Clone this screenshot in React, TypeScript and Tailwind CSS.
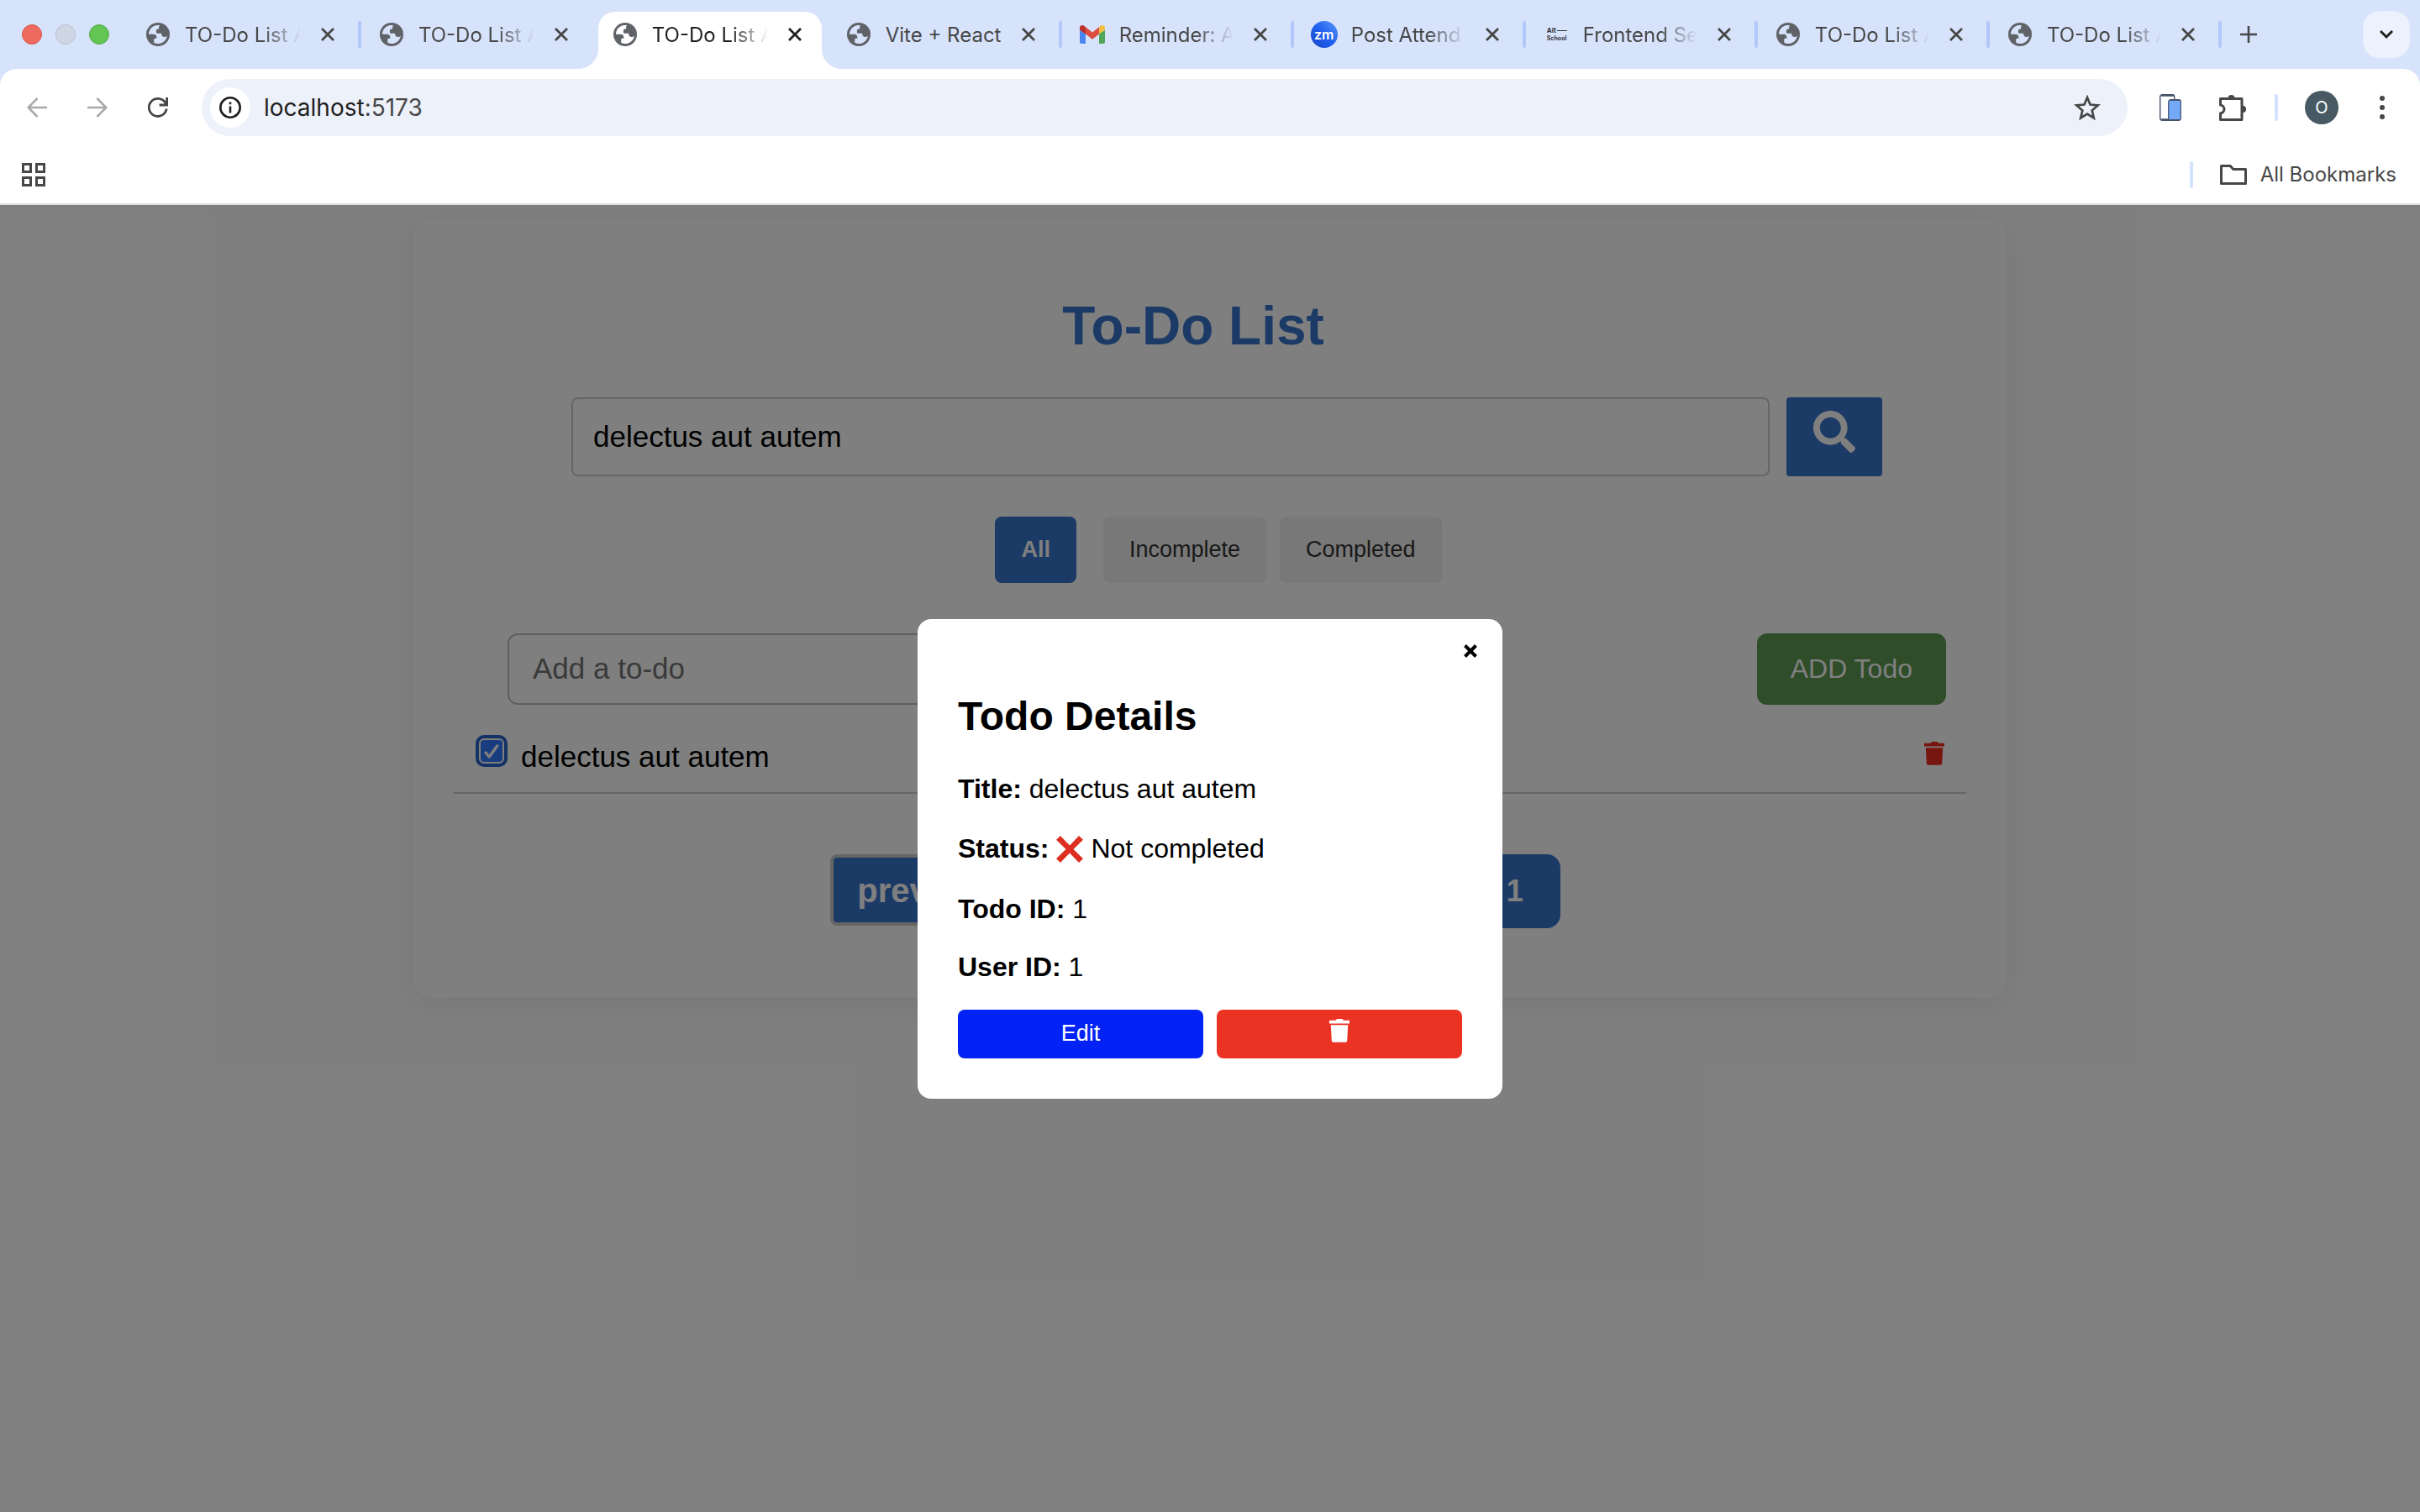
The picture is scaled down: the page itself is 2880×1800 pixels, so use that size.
import { useId } from "react";
import type { ReactNode } from "react";

type TabIcon = "globe" | "gmail" | "zoom" | "alt";
type Tab = { title: string; icon: TabIcon; active?: boolean; wide?: boolean; divider?: boolean; fits?: boolean };

const tabs: Tab[] = [
  { title: "TO-Do List A", icon: "globe", wide: true, divider: true },
  { title: "TO-Do List A", icon: "globe", wide: true },
  { title: "TO-Do List A", icon: "globe", wide: true, active: true },
  { title: "Vite + React", icon: "globe", wide: true, divider: true, fits: true },
  { title: "Reminder: A", icon: "gmail", divider: true },
  { title: "Post Attend", icon: "zoom", divider: true },
  { title: "Frontend Se", icon: "alt", divider: true },
  { title: "TO-Do List A", icon: "globe", divider: true },
  { title: "TO-Do List A", icon: "globe", divider: true },
];

function Globe({ active }: { active?: boolean }) {
  return (
    <svg viewBox="0 0 28 28" className="size-7 shrink-0" aria-hidden="true">
      <circle cx="14" cy="14" r="14" fill="#5f6368" />
      <path
        d="M13.200 3.100C7.600 3.400 3.100 8 3 13.700h5.600c2.300 0 3.700 1.500 3.700 3.400v1.600h-1.600c-1 0-1.500.6-1.500 1.500v3.600c1.500.8 3.100 1.200 4.800 1.200 5.600 0 10.200-4.200 10.900-9.600-.9 1-2 1.500-3.200 1.500-2.200 0-3.500-1.300-3.500-3.200v-.9h-4.400c-1.200 0-1.900-.7-1.900-1.900V9.400c0-1.300.8-2 2-2h1.200V5.600c0-1 .4-1.800 1-2.300-.9-.2-1.900-.3-2.900-.2z"
        fill={active ? "#fff" : "#d7e2fb"}
      />
    </svg>
  );
}

function Gmail() {
  return (
    <svg viewBox="0 0 30 22" className="-mx-px h-[22px] w-[30px] shrink-0" aria-hidden="true">
      <path d="M0 6v14a2 2 0 0 0 2 2h5V9.500z" fill="#4a86ee" />
      <path d="M30 6v14a2 2 0 0 1-2 2h-5V9.500z" fill="#4fa659" />
      <path d="M7 2.200l8 6.300 8-6.300v8.300l-8 6.200-8-6.200z" fill="#dc4e3f" />
      <path d="M0 3.200C0 .4 3.200-.9 5.400.9L7 2.200v8.300L0 5.800z" fill="#b8312a" />
      <path d="M30 3.200C30 .4 26.800-.9 24.600.9L23 2.200v8.300l7-4.700z" fill="#f3bd42" />
    </svg>
  );
}

function Favicon({ icon, active }: { icon: TabIcon; active?: boolean }) {
  if (icon === "globe") return <Globe active={active} />;
  if (icon === "gmail") return <Gmail />;
  if (icon === "zoom") {
    return (
      <span className="-mx-0.5 flex size-8 shrink-0 items-center justify-center rounded-full bg-linear-to-tr from-[#1746c4] via-[#2060f0] to-[#5b95f5] text-[16px] leading-none font-semibold text-white">
        zm
      </span>
    );
  }
  return (
    <span className="flex w-7 shrink-0 flex-col pl-[3px] text-[8px] leading-[9px] font-bold text-[#33363b]">
      <span className="flex items-center gap-px">
        Alt
        <span className="h-px w-3 bg-[#33363b]" />
      </span>
      <span className="text-[7px]">School</span>
    </span>
  );
}

function CloseGlyph() {
  return (
    <svg viewBox="0 0 16 16" className="size-4" fill="none" stroke="currentColor" strokeWidth="2.800" aria-hidden="true">
      <path d="M1 1l14 14M15 1L1 15" />
    </svg>
  );
}

function BrowserTab({ tab }: { tab: Tab }) {
  return (
    <div className={`relative flex h-full min-w-0 items-center pl-[22px] ${tab.wide ? "flex-[278]" : "flex-[276]"}`}>
      {tab.active && (
        <div className="absolute top-3.5 right-2 bottom-0 left-1 rounded-t-[20px] bg-white" aria-hidden="true">
          <svg viewBox="0 0 24 24" className="absolute bottom-0 -left-6 size-6">
            <path d="M24 0v24H0C13.300 24 24 13.300 24 0z" fill="#fff" />
          </svg>
          <svg viewBox="0 0 24 24" className="absolute -right-6 bottom-0 size-6">
            <path d="M0 0v24h24C10.700 24 0 13.300 0 0z" fill="#fff" />
          </svg>
        </div>
      )}
      <div className={`relative flex min-w-0 flex-1 items-center gap-[18px] ${tab.active ? "text-[#1f1f1f]" : "text-[#474747]"}`}>
        <Favicon icon={tab.icon} active={tab.active} />
        <a
          href="#tab"
          className={`min-w-0 flex-1 overflow-hidden pt-0.5 text-[24px] leading-8 whitespace-nowrap ${
            tab.fits ? "" : "[mask-image:linear-gradient(to_right,black_65%,transparent_97%)]"
          }`}
        >
          {tab.title}
        </a>
      </div>
      <button type="button" aria-label="Close tab" className={`relative mr-7 ml-5 ${tab.active ? "text-[#1f1f1f]" : "text-[#474747]"}`}>
        <CloseGlyph />
      </button>
      <span className={`h-8 w-1 shrink-0 rounded-full ${tab.divider ? "bg-[#b0c8fa]" : ""}`} />
    </div>
  );
}

function TabStrip() {
  return (
    <div className="flex h-[82px] bg-[#d7e2fb]">
      <div className="flex w-[152px] shrink-0 items-center gap-4 pl-[26px]">
        <button type="button" aria-label="Close window" className="size-6 rounded-full border border-[#d8584c] bg-[#ed6a5e]" />
        <button type="button" aria-label="Minimise window" className="size-6 rounded-full border border-[#b9bfcc] bg-[#ced5e3]" />
        <button type="button" aria-label="Zoom window" className="size-6 rounded-full border border-[#53a843] bg-[#62c554]" />
      </div>
      <div className="flex min-w-0 flex-1">
        {tabs.map((tab, i) => (
          <BrowserTab key={i} tab={tab} />
        ))}
      </div>
      <div className="flex w-[236px] shrink-0 items-center justify-between pr-3 pl-[22px]">
        <button type="button" aria-label="New tab" className="text-[#474747]">
          <svg viewBox="0 0 20 20" className="size-5" fill="none" stroke="currentColor" strokeWidth="2.600" aria-hidden="true">
            <path d="M10 0v20M0 10h20" />
          </svg>
        </button>
        <button type="button" aria-label="Search tabs" className="flex size-14 items-center justify-center rounded-[20px] bg-[#ebf2fd] text-[#1f1f1f]">
          <svg viewBox="0 0 16 12" className="h-3 w-4" fill="none" stroke="currentColor" strokeWidth="3" aria-hidden="true">
            <path d="M1 2l7 7 7-7" />
          </svg>
        </button>
      </div>
    </div>
  );
}

function IconButton({ label, className, children }: { label: string; className?: string; children: ReactNode }) {
  return (
    <button type="button" aria-label={label} className={`shrink-0 ${className ?? ""}`}>
      {children}
    </button>
  );
}

function Toolbar() {
  return (
    <div className="bg-[#d7e2fb]">
      <div className="flex h-[92px] items-center rounded-t-[20px] bg-white pr-[42px] pl-8">
        <div className="flex w-[208px] shrink-0 items-center gap-12">
          <IconButton label="Back" className="text-[#a9a9a9]">
            <svg viewBox="0 0 24 24" className="size-6" fill="none" stroke="currentColor" strokeWidth="2.500" aria-hidden="true">
              <path d="M24 12H2M12.500 1L1.700 12l10.800 11" />
            </svg>
          </IconButton>
          <IconButton label="Forward" className="text-[#a9a9a9]">
            <svg viewBox="0 0 24 24" className="size-6" fill="none" stroke="currentColor" strokeWidth="2.500" aria-hidden="true">
              <path d="M0 12h22M11.500 1l10.800 11-10.800 11" />
            </svg>
          </IconButton>
          <IconButton label="Reload" className="text-[#474747]">
            <svg viewBox="0 0 24 24" className="size-6" fill="none" stroke="currentColor" strokeWidth="2.800" aria-hidden="true">
              <path d="M22.200 13.500A10.500 10.500 0 1 1 20.500 6l1.800 2.500M22.600 0v9h-9" />
            </svg>
          </IconButton>
        </div>
        <div className="flex h-[68px] min-w-0 flex-1 items-center rounded-full bg-[#edf1fa] pr-8 pl-2.5">
          <button type="button" aria-label="View site information" className="flex size-12 shrink-0 items-center justify-center rounded-full bg-white text-[#1f1f1f]">
            <svg viewBox="0 0 26 26" className="size-[26px]" fill="none" stroke="currentColor" strokeWidth="2.600" aria-hidden="true">
              <circle cx="13" cy="13" r="11.700" />
              <path d="M13 11.500v8M13 6.500v2.800" />
            </svg>
          </button>
          <div className="min-w-0 flex-1 pl-4 text-[28px] leading-9 text-[#1f1f1f]">
            localhost<span className="text-[#474747]">:5173</span>
          </div>
          <IconButton label="Bookmark this tab" className="text-[#474747]">
            <svg viewBox="0 0 32 30" className="h-[30px] w-8" fill="none" stroke="currentColor" strokeWidth="2.700" aria-hidden="true">
              <path d="M16 3l3.500 8.600 9.200.8-7 6.100 2.100 9L16 22.700l-7.800 4.800 2.100-9-7-6.100 9.200-.8z" />
            </svg>
          </IconButton>
        </div>
        <div className="flex shrink-0 items-center pl-[38px]">
          <IconButton label="Device preview">
            <svg viewBox="0 0 26 32" className="h-8 w-[26px]" aria-hidden="true">
              <rect x=".7" y=".7" width="17" height="30.600" rx="2.500" fill="#fff" stroke="#47536b" strokeWidth="1.400" />
              <path d="M2 1.500h15M2 30.500h15" stroke="#47536b" strokeWidth="2.400" />
              <rect x="10.700" y="6.700" width="14.600" height="24.600" rx="2.500" fill="#74a8f8" stroke="#47536b" strokeWidth="1.200" />
              <path d="M12.500 7h11.500M12.500 31h11.500" stroke="#47536b" strokeWidth="1.800" />
            </svg>
          </IconButton>
          <IconButton label="Extensions" className="ml-[45px]">
            <svg viewBox="0 0 32 32" className="size-8" aria-hidden="true">
              <path
                d="M4 5.500h23v5.200M27 25.200V30.500H1.500v-7.800c2.600-.3 4.500-2.300 4.500-4.800s-1.900-4.500-4.500-4.800V5.500H5"
                fill="none"
                stroke="#474747"
                strokeWidth="3"
                strokeLinejoin="round"
              />
              <path d="M27 10v16" stroke="#474747" strokeWidth="3" />
              <path d="M10.500 5a4 4 0 0 1 8 0zM28 13.800a4.200 4.200 0 0 1 0 8.400z" fill="#474747" />
            </svg>
          </IconButton>
          <span className="ml-[34px] h-8 w-1 rounded-full bg-[#d3e3fd]" />
          <button type="button" aria-label="Profile" className="ml-8 flex size-10 items-center justify-center rounded-full bg-[#475a63] text-[20px] leading-none text-white">
            O
          </button>
          <IconButton label="Browser menu" className="ml-[49px]">
            <svg viewBox="0 0 6 28" className="h-7 w-1.5" fill="#474747" aria-hidden="true">
              <circle cx="3" cy="3" r="3" />
              <circle cx="3" cy="14" r="3" />
              <circle cx="3" cy="25" r="3" />
            </svg>
          </IconButton>
        </div>
      </div>
    </div>
  );
}

function BookmarksBar() {
  return (
    <div className="flex h-[70px] items-center justify-between border-b-2 border-[#dfe1e0] bg-white pr-7 pl-[26px] text-[#474747]">
      <IconButton label="Apps">
        <svg viewBox="0 0 28 28" className="size-7" fill="none" stroke="currentColor" strokeWidth="3" aria-hidden="true">
          <path d="M1.500 1.500h9v9h-9zM17.500 1.500h9v9h-9zM1.500 17.500h9v9h-9zM17.500 17.500h9v9h-9z" />
        </svg>
      </IconButton>
      <div className="flex items-center">
        <span className="mr-8 h-8 w-1 rounded-full bg-[#d3e3fd]" />
        <button type="button" className="flex items-center gap-4 text-[24px] leading-8">
          <svg viewBox="0 0 32 24" className="h-6 w-8" fill="none" stroke="currentColor" strokeWidth="3" strokeLinejoin="round" aria-hidden="true">
            <path d="M1.500 1.500h10.700l3.600 4h14.700v17h-29z" />
          </svg>
          All Bookmarks
        </button>
      </div>
    </div>
  );
}

function TrashIcon({ className }: { className: string }) {
  return (
    <svg viewBox="0 0 24 28" className={className} fill="currentColor" aria-hidden="true">
      <path d="M0 1.800h7.500L9 0h6.500L17 1.800h7V5.600H0zM1.800 7.200h20.400l-1 18.800a1.800 1.800 0 0 1-1.800 1.700H4.600a1.800 1.800 0 0 1-1.800-1.700z" />
    </svg>
  );
}

function TodoPage() {
  const rowId = useId();
  return (
    <div className="mx-auto mt-4 w-[1896px] max-w-full rounded-3xl bg-white px-12 pt-16 pb-[83px] shadow-[0_8px_40px_rgba(0,0,0,0.08)]">
      <h1 className="pt-7 pr-10 text-center text-[64px] leading-[72px] font-bold text-[#3674cc]">To-Do List</h1>

      <form className="mt-[49px] flex gap-5 pr-[100px] pl-[140px]" onSubmit={(e) => e.preventDefault()}>
        <input
          type="text"
          aria-label="Search todos"
          defaultValue="delectus aut autem"
          className="h-[94px] min-w-0 flex-1 rounded-lg border-2 border-[#ccc] bg-white px-6 text-[35px] leading-10 text-black"
        />
        <button type="submit" aria-label="Search" className="flex items-start rounded bg-[#3674cc] px-8 pt-4 text-white">
          <svg viewBox="0 0 512 512" className="size-[50px]" fill="currentColor" aria-hidden="true">
            <path d="M505 442.700L405.300 343c-4.500-4.500-10.600-7-17-7H372c27.600-35.300 44-79.700 44-128C416 93.100 322.900 0 208 0S0 93.100 0 208s93.100 208 208 208c48.300 0 92.700-16.400 128-44v16.300c0 6.400 2.500 12.500 7 17l99.700 99.700c9.400 9.400 24.600 9.400 33.900 0l28.300-28.300c9.400-9.400 9.400-24.600.1-34zM208 336c-70.700 0-128-57.200-128-128 0-70.700 57.200-128 128-128 70.700 0 128 57.200 128 128 0 70.700-57.200 128-128 128z" />
          </svg>
        </button>
      </form>

      <div className="mt-12 flex justify-center pl-5 text-[27px] leading-[31px]">
        <button type="button" className="mr-8 rounded-lg bg-[#3674cc] px-[31px] py-6 font-bold text-white">
          All
        </button>
        <button type="button" className="mr-4 rounded-lg bg-[#f0f0f0] px-[31px] py-6 text-[#333]">
          Incomplete
        </button>
        <button type="button" className="rounded-lg bg-[#f0f0f0] px-[31px] py-6 text-[#333]">
          Completed
        </button>
      </div>

      <form className="mt-[60px] flex items-stretch justify-between pr-6 pl-16" onSubmit={(e) => e.preventDefault()}>
        <input
          type="text"
          aria-label="New todo"
          placeholder="Add a to-do"
          className="h-[85px] w-3/5 rounded-xl border-2 border-[#bfbfbf] bg-white px-7 pb-0.5 text-[35px] leading-10 placeholder:text-[#757575] placeholder:opacity-100"
        />
        <button type="submit" className="rounded-xl bg-[#5c9a50] px-10 pb-0.5 text-[32px] leading-9 text-white">
          ADD Todo
        </button>
      </form>

      <ul>
        <li className="flex h-[106px] items-start justify-between border-b-2 border-[#ccc] pr-[26px] pl-8">
          <div className="grid pt-[42px]">
            <input
              id={rowId}
              type="checkbox"
              defaultChecked
              className="peer col-start-1 row-start-1 size-[26px] appearance-none rounded bg-[#2e7aff] outline-4 outline-offset-2 outline-[#2864c8]"
            />
            <svg
              viewBox="0 0 26 26"
              className="pointer-events-none invisible col-start-1 row-start-1 size-[26px] peer-checked:visible"
              fill="none"
              stroke="#fff"
              strokeWidth="3.400"
              strokeLinecap="round"
              strokeLinejoin="round"
              aria-hidden="true"
            >
              <path d="M6 15l4.200 5L19.800 7" />
            </svg>
          </div>
          <label htmlFor={rowId} className="flex-1 pt-[42px] pl-[22px] text-[35px] leading-10 text-black">
            delectus aut autem
          </label>
          <button type="button" aria-label="Delete todo" className="pt-11 text-[#ec2c1e]">
            <TrashIcon className="h-7 w-6" />
          </button>
        </li>
      </ul>

      <nav aria-label="Pages" className="mt-[72px] flex justify-center gap-4 pr-[35px] text-[40px] font-bold text-white">
        <button type="button" className="h-[85px] rounded-lg border-4 border-[#ccc] bg-[#3674cc] px-7 leading-10">
          prev
        </button>
        <span className="h-[88px] w-[704px] rounded-2xl bg-[#3674cc] px-11 text-right text-[36px] leading-[88px]">Page 1 of 1</span>
      </nav>
    </div>
  );
}

function DetailsDialog() {
  return (
    <div className="absolute inset-0 flex items-center justify-center bg-black/50">
      <div role="dialog" aria-modal="true" aria-labelledby="details-title" className="relative w-[696px] rounded-2xl bg-white p-12 text-[32px] leading-[37px] text-black">
        <button type="button" aria-label="Close details" className="absolute top-[30px] right-[30px]">
          <svg viewBox="0 0 16 16" className="size-4" fill="none" stroke="currentColor" strokeWidth="4" aria-hidden="true">
            <path d="M1.500 1.500l13 13M14.500 1.500l-13 13" />
          </svg>
        </button>
        <h2 id="details-title" className="mt-10 text-[48px] leading-[56px] font-bold">
          Todo Details
        </h2>
        <p className="mt-10">
          <strong>Title:</strong> delectus aut autem
        </p>
        <p className="mt-8 flex h-[42px] items-center gap-[9px]">
          <strong>Status:</strong>
          <svg viewBox="0 0 32 32" className="size-8" fill="#dd2e21" aria-label="No" role="img">
            <path d="M5 0l11 11.500L27 0l5 4.800L20.500 16 32 27.200 27 32 16 20.500 5 32l-5-4.800L11.500 16 0 4.800z" />
          </svg>
          Not completed
        </p>
        <p className="mt-8">
          <strong>Todo ID:</strong> 1
        </p>
        <p className="mt-8">
          <strong>User ID:</strong> 1
        </p>
        <div className="mt-8 grid grid-cols-2 gap-4">
          <button type="button" className="h-[58px] rounded-lg bg-[#0322f5] pb-0.5 text-[27px] leading-8 text-white">
            Edit
          </button>
          <button type="button" aria-label="Delete" className="flex justify-center rounded-lg bg-[#eb3323] pt-[11px] text-white">
            <TrashIcon className="h-7 w-6" />
          </button>
        </div>
      </div>
    </div>
  );
}

export default function App() {
  return (
    <div className="flex min-h-screen flex-col bg-white">
      <header className="font-['Inter',sans-serif]">
        <TabStrip />
        <Toolbar />
        <BookmarksBar />
      </header>
      <main className="relative flex-1 overflow-hidden font-['Liberation_Sans',sans-serif]">
        <TodoPage />
        <DetailsDialog />
      </main>
    </div>
  );
}
